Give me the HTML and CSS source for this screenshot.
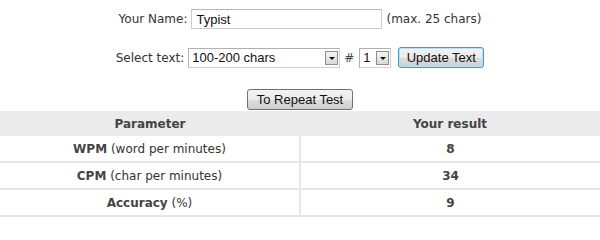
FILE: index.html
```html
<!DOCTYPE html>
<html>
<head>
<meta charset="utf-8">
<link rel="stylesheet" href="styles.css">
</head>
<body>
<div class="form">
  <div class="row row-name">
    <label class="lbl" for="name">Your Name:</label>
    <input id="name" class="txt" type="text" value="Typist">
    <span class="hint">(max. 25 chars)</span>
  </div>
  <div class="row row-select">
    <label class="lbl" for="len">Select text:</label>
    <span class="sel sel-wide">
      <select id="len"><option>100-200 chars</option></select>
      <span class="arrow"></span>
    </span>
    <span class="hash">#</span>
    <span class="sel sel-num">
      <select><option>1</option></select>
      <span class="arrow"></span>
    </span>
    <button class="btn btn-focus" type="button">Update Text</button>
  </div>
  <div class="row row-repeat">
    <button class="btn" type="button">To Repeat Test</button>
  </div>
</div>
<table class="results">
  <thead>
    <tr><th>Parameter</th><th>Your result</th></tr>
  </thead>
  <tbody>
    <tr><td><b>WPM</b> (word per minutes)</td><td><b>8</b></td></tr>
    <tr><td><b>CPM</b> (char per minutes)</td><td><b>34</b></td></tr>
    <tr><td><b>Accuracy</b> (%)</td><td><b>9</b></td></tr>
  </tbody>
</table>
</body>
</html>
```
FILE: styles.css
```css
html, body {
  margin: 0;
  padding: 0;
  background: #ffffff;
}
body {
  font-family: "DejaVu Sans", Verdana, sans-serif;
  font-size: 12px;
  color: #333333;
  width: 600px;
  overflow: hidden;
}
.form {
  display: flex;
  flex-direction: column;
  align-items: center;
  padding-top: 9px;
}
.row {
  display: flex;
  align-items: center;
  justify-content: center;
  width: 600px;
}
.row-select {
  margin-top: 18px;
}
.row-repeat {
  margin-top: 21px;
}
.lbl {
  margin-right: 4px;
  color: #333;
}
.txt {
  box-sizing: border-box;
  width: 191px;
  height: 20px;
  border: 1px solid #cdcdcd;
  border-top-color: #b5b5b5;
  padding: 0 4px;
  margin: 0;
  font-family: "Liberation Sans", Arial, sans-serif;
  font-size: 13px;
  color: #111;
  outline: none;
}
.hint {
  margin-left: 4px;
}
.sel {
  position: relative;
  display: inline-block;
  height: 20px;
}
.sel select {
  appearance: none;
  -webkit-appearance: none;
  box-sizing: border-box;
  height: 20px;
  margin: 0;
  border: 1px solid #a5a5a5;
  border-color: #b0b0b0 #cfcfcf #cfcfcf #b0b0b0;
  background: #fff;
  padding: 0 0 0 3px;
  font-family: "Liberation Sans", Arial, sans-serif;
  font-size: 13px;
  color: #111;
  border-radius: 0;
  outline: none;
}
.sel-wide select { width: 152px; }
.sel-num select { width: 32px; color: #2a0a0a; }
.arrow {
  position: absolute;
  right: 2px;
  top: 3px;
  width: 13px;
  height: 14px;
  box-sizing: border-box;
  border: 1px solid #8d8d8d;
  background: linear-gradient(#f6f6f6, #d8d8d8);
}
.arrow::after {
  content: "";
  position: absolute;
  left: 3px;
  top: 5px;
  border-left: 3px solid transparent;
  border-right: 3px solid transparent;
  border-top: 3px solid #111;
}
.hash {
  margin: 0 5px 0 4px;
  color: #444;
}
.btn {
  box-sizing: border-box;
  height: 21px;
  padding: 0 7px;
  margin: 0;
  border: 1px solid #707070;
  border-radius: 3px;
  background: linear-gradient(#f3f3f3 0%, #ebebeb 50%, #dddddd 51%, #cfcfcf 100%);
  font-family: "Liberation Sans", Arial, sans-serif;
  font-size: 13px;
  color: #111;
}
.btn-focus {
  margin-left: 7px;
  border-color: #3c9bd1;
  box-shadow: inset 0 0 0 1px #b9e0f5;
  width: 86px;
}
.row-repeat .btn {
  width: 106px;
  height: 21px;
}
.results {
  margin-top: 1px;
  width: 600px;
  border-collapse: collapse;
  table-layout: fixed;
  font-size: 12px;
}
.results th {
  background: #ebebeb;
  height: 25px;
  padding: 0;
  font-weight: bold;
  color: #444;
  text-align: center;
}
.results td {
  height: 25px;
  padding: 0;
  text-align: center;
  color: #333;
  border-bottom: 2px solid #e6e6e6;
}
.results td + td {
  border-left: 2px solid #e6e6e6;
}
.results b {
  color: #444;
}
```
